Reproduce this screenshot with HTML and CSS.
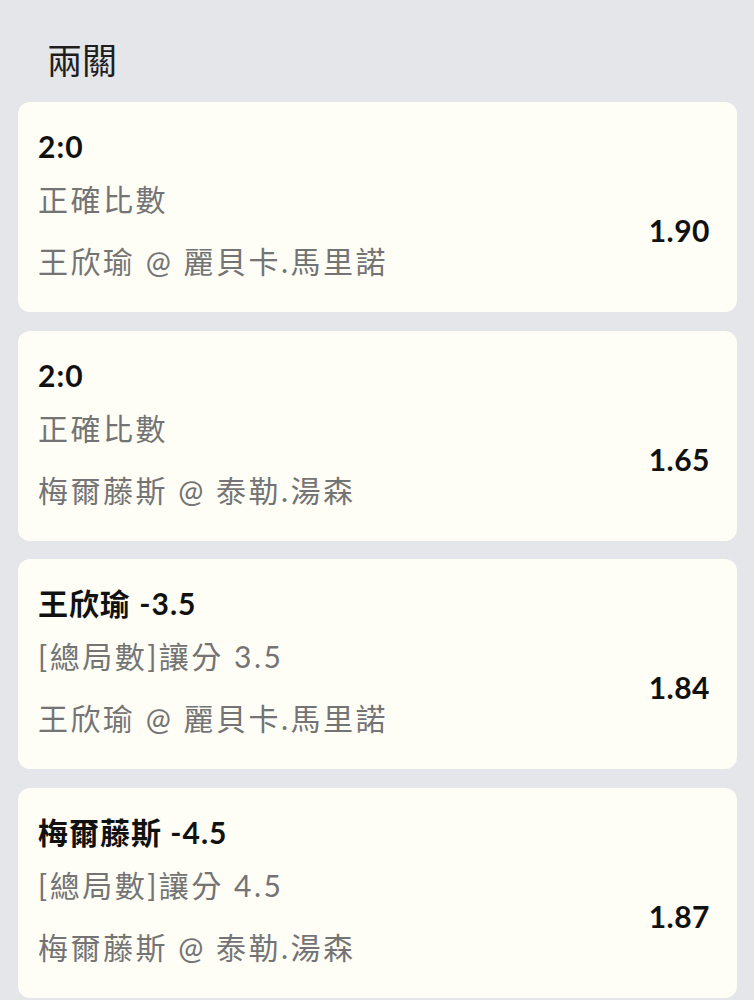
FILE: index.html
```html
<html>
	<head>
		<meta charset="utf-8">
		<title>兩關</title>
		<link rel="stylesheet" href="styles.css">
	</head>
	<body>
		<div class="panel">
			<h3 class="panel-title">兩關</h3>

			<div class="bet">
				<div class="bet-pick">2:0</div>
				<div class="bet-row">
					<div class="bet-info">
						<div class="bet-market">正確比數</div>
						<div class="bet-match">王欣瑜 @ 麗貝卡.馬里諾</div>
					</div>
					<div class="bet-odds">1.90</div>
				</div>
			</div>

			<div class="bet">
				<div class="bet-pick">2:0</div>
				<div class="bet-row">
					<div class="bet-info">
						<div class="bet-market">正確比數</div>
						<div class="bet-match">梅爾藤斯 @ 泰勒.湯森</div>
					</div>
					<div class="bet-odds">1.65</div>
				</div>
			</div>

			<div class="bet">
				<div class="bet-pick">王欣瑜 -3.5</div>
				<div class="bet-row">
					<div class="bet-info">
						<div class="bet-market">[總局數]讓分 3.5</div>
						<div class="bet-match">王欣瑜 @ 麗貝卡.馬里諾</div>
					</div>
					<div class="bet-odds">1.84</div>
				</div>
			</div>

			<div class="bet">
				<div class="bet-pick">梅爾藤斯 -4.5</div>
				<div class="bet-row">
					<div class="bet-info">
						<div class="bet-market">[總局數]讓分 4.5</div>
						<div class="bet-match">梅爾藤斯 @ 泰勒.湯森</div>
					</div>
					<div class="bet-odds">1.87</div>
				</div>
			</div>
		</div>
	</body>
</html>
```

FILE: styles.css
```css
body{
	margin:0;
	background:#e5e6e9;
	font-family:Lato, "Noto Sans CJK TC", sans-serif;
}

.panel{
	padding:0 17px 20px 18px;
}

.panel-title{
	margin:0;
	padding:36px 0 18px 29px;
	font-size:35px;
	line-height:48px;
	font-weight:normal;
	color:#1e1e1e;
}

.bet{
	background:#fefdf6;
	border-radius:12px;
	padding:24px 27px 28px 20px;
	margin-bottom:18.7px;
}

.bet-pick{
	font-size:30px;
	line-height:40px;
	font-weight:bold;
	letter-spacing:1px;
	color:#111;
}

.bet-row{
	display:flex;
	align-items:center;
	justify-content:space-between;
}

.bet-market{
	margin-top:10px;
	font-size:30px;
	line-height:46px;
	letter-spacing:2.5px;
	color:#747474;
}

.bet-match{
	margin-top:16px;
	font-size:30px;
	line-height:46px;
	letter-spacing:2.5px;
	color:#747474;
}

.bet-odds{
	margin-top:10px;
	font-size:30px;
	font-weight:bold;
	letter-spacing:0.5px;
	color:#111;
}
```
